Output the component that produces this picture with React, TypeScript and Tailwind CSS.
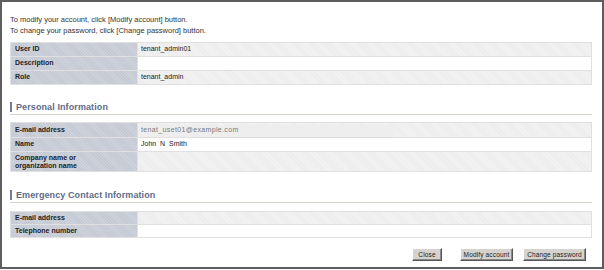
import React from "react";

const LBL =
  "bg-[#c9ced8] bg-[image:repeating-linear-gradient(45deg,#c4c9d3_0px,#c4c9d3_1px,#cdd2db_1px,#cdd2db_2px)] pl-[4px] font-bold text-[7px] text-[#1e1e1e] flex items-center";
const VAL_H =
  "bg-[#efefef] bg-[image:repeating-linear-gradient(45deg,#ececec_0px,#ececec_1px,#f3f3f3_1px,#f3f3f3_2px)] pl-[3px] text-[7px] text-[#222] flex items-center";
const VAL_W = "bg-white pl-[3px] text-[7px] text-[#222] flex items-center";

function Row({
  label,
  value,
  hatched,
  h,
  valueClass,
  labelLead,
}: {
  label: React.ReactNode;
  value?: React.ReactNode;
  hatched?: boolean;
  h: string;
  valueClass?: string;
  labelLead?: boolean;
}) {
  return (
    <>
      <div className={`${LBL} ${h} ${labelLead ? "leading-[7.5px]" : ""}`}>{label}</div>
      <div className={`${hatched ? VAL_H : VAL_W} ${h} ${valueClass ?? ""}`}>{value}</div>
    </>
  );
}

function Header({ title, mt }: { title: string; mt: string }) {
  return (
    <div className={`${mt} border-b border-[#d8d4cc] pb-[2px] flex items-center`}>
      <div className="w-[2px] h-[10px] bg-[#6f7d9b]" />
      <div className="ml-[4px] text-[9px] leading-[10px] font-bold text-[#5d6b8a] tracking-[0.1px]">
        {title}
      </div>
    </div>
  );
}

function Btn({ children, w }: { children: React.ReactNode; w: string }) {
  return (
    <div
      className={`${w} h-[13px] bg-[#d6d3ce] border border-t-white border-l-white border-r-[#555] border-b-[#555] shadow-[inset_-1px_-1px_0_#8a8a8a] flex items-center justify-center text-[6.5px] text-[#222] tracking-[0.15px]`}
    >
      {children}
    </div>
  );
}

export default function App() {
  return (
    <div
      className="w-[604px] h-[270px] bg-white"
      style={{ fontFamily: '"Liberation Sans", Arial, sans-serif' }}
    >
      <div className="h-[269px] border-2 border-[#5e5e5e] pl-[8px] pr-[10px] flex flex-col">
        <div className="pt-[13px] text-[7.5px] leading-[10.5px] text-[#333]">
          <div>To modify your account, click [Modify account] button.</div>
          <div>To change your password, click [Change password] button.</div>
        </div>

        <div className="mt-[6px] grid grid-cols-[126px_1fr] gap-px bg-[#e0e0e0] p-px">
          <Row label="User ID" value="tenant_admin01" hatched h="h-[13px]" />
          <Row label="Description" h="h-[13px]" />
          <Row label="Role" value="tenant_admin" hatched h="h-[13px]" />
        </div>

        <Header title="Personal Information" mt="mt-[17px]" />

        <div className="mt-[7px] grid grid-cols-[126px_1fr] gap-px bg-[#e0e0e0] p-px">
          <div className={`${LBL} h-[14px]`}>E-mail address</div>
          <div className={`${VAL_H} h-[14px] relative`}>
            <div className="absolute left-0 top-[2px] bottom-0 w-[256px] bg-[#eeeeee]" />
            <span className="relative text-[#7a7a7a] tracking-[0.35px]">tenat_uset01@example.com</span>
          </div>
          <Row label="Name" value={<span className="whitespace-pre">John  N  Smith</span>} h="h-[13px]" />
          <Row
            label={
              <span>
                Company name or
                <br />
                organization name
              </span>
            }
            hatched
            h="h-[19px]"
            labelLead
          />
        </div>

        <Header title="Emergency Contact Information" mt="mt-[18px]" />

        <div className="mt-[8px] grid grid-cols-[126px_1fr] gap-px bg-[#e0e0e0] p-px">
          <Row label="E-mail address" hatched h="h-[12px]" />
          <Row label="Telephone number" h="h-[12px]" />
        </div>

        <div className="mt-[10px] flex justify-end pr-[6px]">
          <Btn w="w-[30px]">Close</Btn>
          <div className="ml-[18px]">
            <Btn w="w-[53px]">Modify account</Btn>
          </div>
          <div className="ml-[10px]">
            <Btn w="w-[63px]">Change password</Btn>
          </div>
        </div>
      </div>
    </div>
  );
}
